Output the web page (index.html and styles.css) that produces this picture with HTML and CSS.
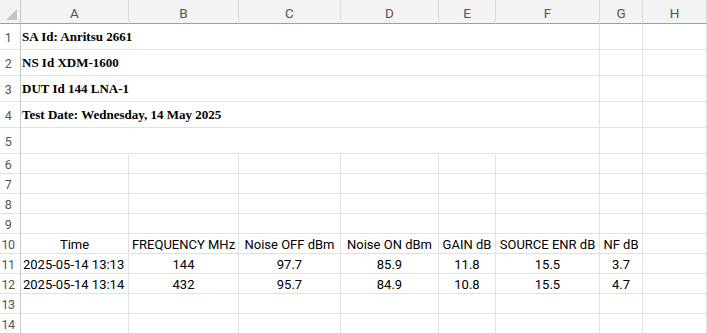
FILE: index.html
```html
<!DOCTYPE html>
<html>
<head>
	<meta charset="utf-8">
	<title>NF Sheet</title>
	<link rel="stylesheet" href="styles.css">
</head>
<body>
	<div class="sheet">
		<!-- column headers -->
		<div class="corner"><span class="tri"></span></div>
		<div class="ch">A</div>
		<div class="ch">B</div>
		<div class="ch">C</div>
		<div class="ch">D</div>
		<div class="ch">E</div>
		<div class="ch">F</div>
		<div class="ch">G</div>
		<div class="ch">H</div>

		<!-- title rows (A:F merged) -->
		<div class="rh">1</div>
		<div class="c merged title">SA Id: Anritsu 2661</div>
		<div class="c"></div>
		<div class="c"></div>

		<div class="rh">2</div>
		<div class="c merged title">NS Id XDM-1600</div>
		<div class="c"></div>
		<div class="c"></div>

		<div class="rh">3</div>
		<div class="c merged title">DUT Id 144 LNA-1</div>
		<div class="c"></div>
		<div class="c"></div>

		<div class="rh">4</div>
		<div class="c merged title">Test Date: Wednesday, 14 May 2025</div>
		<div class="c"></div>
		<div class="c"></div>

		<div class="rh">5</div>
		<div class="c merged"></div>
		<div class="c"></div>
		<div class="c"></div>

		<div class="rh">6</div>
		<div class="c"></div><div class="c"></div><div class="c"></div><div class="c"></div>
		<div class="c"></div><div class="c"></div><div class="c"></div><div class="c"></div>

		<div class="rh">7</div>
		<div class="c"></div><div class="c"></div><div class="c"></div><div class="c"></div>
		<div class="c"></div><div class="c"></div><div class="c"></div><div class="c"></div>

		<div class="rh">8</div>
		<div class="c"></div><div class="c"></div><div class="c"></div><div class="c"></div>
		<div class="c"></div><div class="c"></div><div class="c"></div><div class="c"></div>

		<div class="rh">9</div>
		<div class="c"></div><div class="c"></div><div class="c"></div><div class="c"></div>
		<div class="c"></div><div class="c"></div><div class="c"></div><div class="c"></div>

		<div class="rh">10</div>
		<div class="c mid">Time</div>
		<div class="c mid">FREQUENCY MHz</div>
		<div class="c mid">Noise OFF dBm</div>
		<div class="c mid">Noise ON dBm</div>
		<div class="c mid">GAIN dB</div>
		<div class="c mid">SOURCE ENR dB</div>
		<div class="c mid">NF dB</div>
		<div class="c"></div>

		<div class="rh">11</div>
		<div class="c">2025-05-14 13:13</div>
		<div class="c mid">144</div>
		<div class="c mid">97.7</div>
		<div class="c mid">85.9</div>
		<div class="c mid">11.8</div>
		<div class="c mid">15.5</div>
		<div class="c mid">3.7</div>
		<div class="c"></div>

		<div class="rh">12</div>
		<div class="c">2025-05-14 13:14</div>
		<div class="c mid">432</div>
		<div class="c mid">95.7</div>
		<div class="c mid">84.9</div>
		<div class="c mid">10.8</div>
		<div class="c mid">15.5</div>
		<div class="c mid">4.7</div>
		<div class="c"></div>

		<div class="rh">13</div>
		<div class="c"></div><div class="c"></div><div class="c"></div><div class="c"></div>
		<div class="c"></div><div class="c"></div><div class="c"></div><div class="c"></div>

		<div class="rh">14</div>
		<div class="c"></div><div class="c"></div><div class="c"></div><div class="c"></div>
		<div class="c"></div><div class="c"></div><div class="c"></div><div class="c"></div>
	</div>
</body>
</html>
```

FILE: styles.css
```css
*{
	padding:0;
	margin:0;
	box-sizing: border-box;
}
body{
	background: #fff;
	font-family: Roboto, "Liberation Sans", sans-serif;
	font-size: 13px;
	color: #000;
	overflow: hidden;
}
.sheet{
	display: grid;
	grid-template-columns: 21px 108px 110px 102px 98px 57px 104px 43px 64px;
	grid-template-rows: 24px repeat(5, 26px) repeat(9, 20px);
}
.corner{
	background: #f3f3f3;
	border-right: 1px solid #c8c8c8;
	border-bottom: 1px solid #9e9e9e;
	position: relative;
}
.tri{
	position: absolute;
	right: 3px;
	bottom: 3px;
	width: 0;
	height: 0;
	border-left: 11px solid transparent;
	border-bottom: 11px solid #c4c4c4;
}
.ch{
	background: #f3f3f3;
	border-right: 1px solid #dcdcdc;
	border-bottom: 1px solid #9e9e9e;
	color: #555;
	font-size: 13.5px;
	display: flex;
	align-items: center;
	justify-content: center;
	padding-top: 2px;
}
.rh{
	background: #fff;
	border-right: 1px solid #c8c8c8;
	border-bottom: 1px solid #e1e1e1;
	color: #555;
	font-size: 12.5px;
	letter-spacing: -0.5px;
	display: flex;
	align-items: center;
	justify-content: center;
	padding-right: 4px;
	padding-top: 1px;
}
.c{
	border-right: 1px solid #e1e1e1;
	border-bottom: 1px solid #e1e1e1;
	display: flex;
	align-items: center;
	padding: 1px 2px 0 2px;
	white-space: nowrap;
	overflow: visible;
}
.merged{
	grid-column: span 6;
}
.title{
	font-family: "Liberation Serif", "Times New Roman", serif;
	font-weight: bold;
	padding-left: 1px;
}
.mid{
	justify-content: center;
}
```
